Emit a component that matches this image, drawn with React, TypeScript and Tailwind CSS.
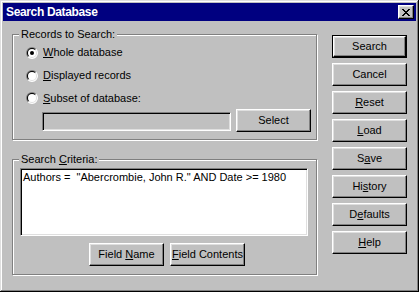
import React from "react";

const font = { fontFamily: '"Liberation Sans", Arial, sans-serif' };

function Radio({ checked }: { checked?: boolean }) {
  return (
    <svg width="12" height="12" viewBox="0 0 12 12" className="shrink-0">
      <path d="M1.757 10.243 A6 6 0 0 1 10.243 1.757 Z" fill="#808080" />
      <path d="M10.243 1.757 A6 6 0 0 1 1.757 10.243 Z" fill="#ffffff" />
      <path d="M2.464 9.536 A5 5 0 0 1 9.536 2.464 Z" fill="#000000" />
      <path d="M9.536 2.464 A5 5 0 0 1 2.464 9.536 Z" fill="#dfdfdf" />
      <circle cx="6" cy="6" r="4" fill="#ffffff" />
      {checked && <circle cx="6" cy="6" r="2" fill="#000000" />}
    </svg>
  );
}

function Btn({ children, def, className = "" }: { children: React.ReactNode; def?: boolean; className?: string }) {
  const inner = (
    <div className="w-full h-full flex items-center justify-center border border-t-white border-l-white border-r-black border-b-black shadow-[inset_-1px_-1px_0_#808080,inset_1px_1px_0_#dfdfdf] text-[11px] text-black leading-none">
      <span className="pb-[1px]">{children}</span>
    </div>
  );
  if (def) {
    return <div className={"w-[75px] h-[23px] border border-black " + className}>{inner}</div>;
  }
  return <div className={"w-[75px] h-[23px] " + className}>{inner}</div>;
}

function Group({ label, className = "", children }: { label: React.ReactNode; className?: string; children: React.ReactNode }) {
  return (
    <div className={"relative border border-[#808080] shadow-[inset_1px_1px_0_#fff,1px_1px_0_#fff] " + className}>
      <div className="absolute left-[6px] top-[-7px] bg-[#c0c0c0] px-[2px] text-[11px] leading-[13px] text-black">
        {label}
      </div>
      {children}
    </div>
  );
}

function U({ children }: { children: React.ReactNode }) {
  return <span className="underline underline-offset-[1px] decoration-1">{children}</span>;
}

export default function App() {
  return (
    <div
      style={font}
      className="w-[419px] h-[292px] bg-[#c0c0c0] p-[3px] flex flex-col shadow-[inset_-1px_-1px_0_#000,inset_1px_1px_0_#dfdfdf,inset_-2px_-2px_0_#808080,inset_2px_2px_0_#fff]"
    >
      <div className="h-[18px] bg-[#000080] flex items-center justify-between pl-[3px] pr-[2px]">
        <span className="text-white font-bold text-[12px] tracking-[-0.35px] leading-none">Search Database</span>
        <div className="w-[16px] h-[14px] bg-[#c0c0c0] border border-t-white border-l-white border-r-black border-b-black shadow-[inset_-1px_-1px_0_#808080,inset_1px_1px_0_#dfdfdf] flex items-center justify-center">
          <svg width="8" height="7" viewBox="0 0 8 7" shapeRendering="crispEdges">
            <path
              fill="#000"
              d="M0 0h2v1h-2zM6 0h2v1h-2zM1 1h2v1h-2zM5 1h2v1h-2zM2 2h4v1h-4zM3 3h2v1h-2zM2 4h4v1h-4zM1 5h2v1h-2zM5 5h2v1h-2zM0 6h2v1h-2zM6 6h2v1h-2z"
            />
          </svg>
        </div>
      </div>

      <div className="flex pl-[9px] pt-[13px]">
        <div className="w-[305px] flex flex-col">
          <Group label="Records to Search:" className="h-[106px]">
            <div className="pl-[13px] pt-[6px] flex flex-col">
              <div className="h-[23px] flex items-center gap-[5px] text-[11px]">
                <Radio checked />
                <span><U>W</U>hole database</span>
              </div>
              <div className="h-[23px] flex items-center gap-[5px] text-[11px]">
                <Radio />
                <span><U>D</U>isplayed records</span>
              </div>
              <div className="h-[22px] flex items-center gap-[5px] text-[11px]">
                <Radio />
                <span><U>S</U>ubset of database:</span>
              </div>
              <div className="flex items-start gap-[5px] ml-[16px]">
                <div className="mt-[3px] w-[189px] h-[19px] bg-[#c0c0c0] border border-t-[#808080] border-l-[#808080] border-r-white border-b-white shadow-[inset_1px_1px_0_#000,inset_-1px_-1px_0_#dfdfdf]" />
                <Btn>Select</Btn>
              </div>
            </div>
          </Group>

          <Group label={<span>Search <U>C</U>riteria:</span>} className="h-[116px] mt-[19px]">
            <div className="pl-[7px] pt-[8px] flex flex-col">
              <div className="w-[288px] h-[68px] bg-white border border-t-[#808080] border-l-[#808080] border-r-white border-b-white shadow-[inset_1px_1px_0_#000,inset_-1px_-1px_0_#dfdfdf] pl-[2px] pt-[2px] text-[11px] leading-[13px] text-black whitespace-pre">
                {'Authors =  "Abercrombie, John R." AND Date >= 1980'}
              </div>
              <div className="flex gap-[6px] mt-[7px] ml-[69px]">
                <Btn>Field <U>N</U>ame</Btn>
                <Btn><U>F</U>ield Contents</Btn>
              </div>
            </div>
          </Group>
        </div>

        <div className="ml-[15px] mt-[1px] flex flex-col gap-[5px]">
          <Btn def>Search</Btn>
          <Btn>Cancel</Btn>
          <Btn><U>R</U>eset</Btn>
          <Btn><U>L</U>oad</Btn>
          <Btn>S<U>a</U>ve</Btn>
          <Btn>Hi<U>s</U>tory</Btn>
          <Btn>D<U>e</U>faults</Btn>
          <Btn><U>H</U>elp</Btn>
        </div>
      </div>
    </div>
  );
}
